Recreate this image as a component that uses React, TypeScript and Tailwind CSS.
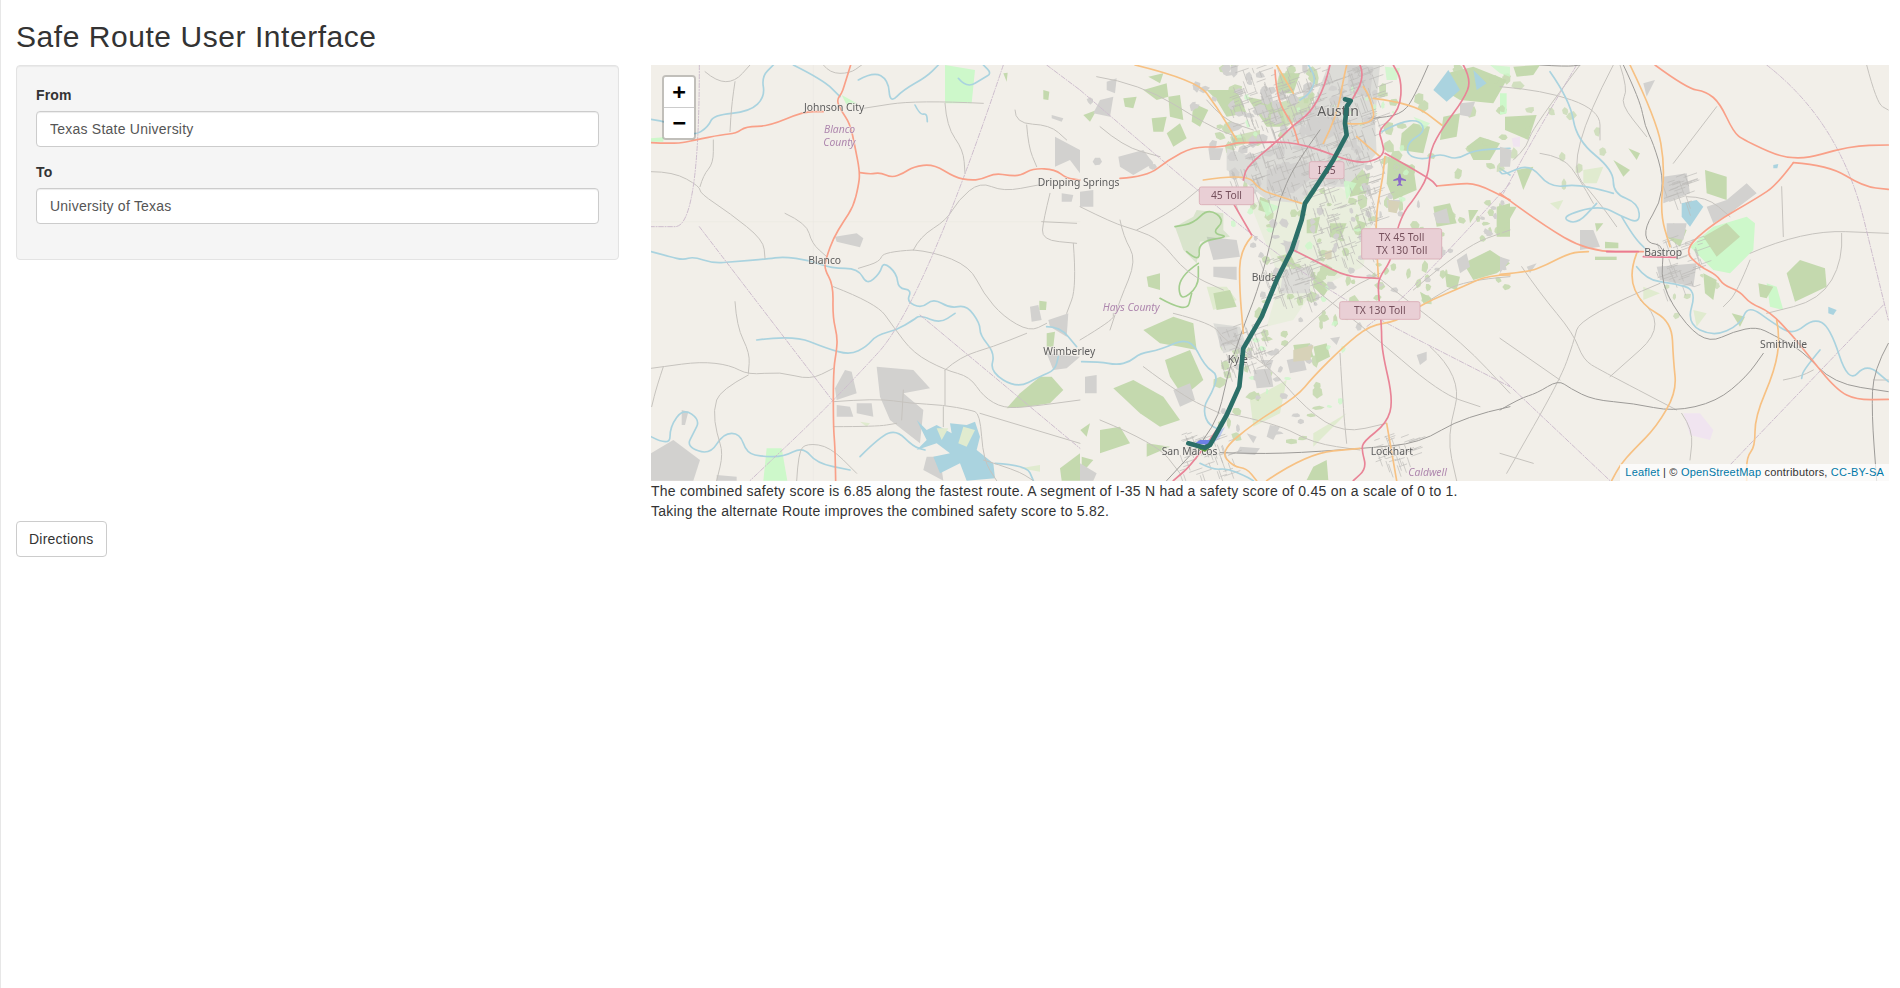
import React from "react";

const TRUNK = "#f9a088";
const MOTOR = "#e98497";
const SEC = "#f7c183";
const ROAD = "#c6c3be";
const RAIL = "#9d9b98";
const WATER = "#aad3df";
const BOUND = "#cdbdcd";
const URBAN = "#d2d1cf";
const OLIVE = "#c4d9ae";
const MINT = "#cdf8ca";
const SOFT = "#e0ebcf";

function smooth(s: string) {
  const p = s.trim().split(/\s+/).map((a) => a.split(",").map(Number));
  if (p.length < 3) return "M" + p.map((a) => a.join(" ")).join("L");
  let d = `M${p[0][0]} ${p[0][1]}`;
  for (let i = 1; i < p.length - 1; i++) {
    const mx = (p[i][0] + p[i + 1][0]) / 2;
    const my = (p[i][1] + p[i + 1][1]) / 2;
    d += `Q${p[i][0]} ${p[i][1]} ${mx} ${my}`;
  }
  const e = p[p.length - 1];
  return d + `L${e[0]} ${e[1]}`;
}

function rng(seed: number) {
  let s = seed;
  return () => {
    s = (s * 16807) % 2147483647;
    return s / 2147483647;
  };
}

function blobs(n: number, x0: number, y0: number, x1: number, y1: number, min: number, max: number, seed: number) {
  const r = rng(seed);
  const out: string[] = [];
  for (let i = 0; i < n; i++) {
    const x = x0 + r() * (x1 - x0);
    const y = y0 + r() * (y1 - y0);
    const w = min + r() * (max - min);
    const h = min + r() * (max - min);
    const a = r() * 3.14;
    const pts: string[] = [];
    for (let k = 0; k < 6; k++) {
      const t = (k / 6) * 6.283 + a;
      const q = 0.65 + r() * 0.5;
      pts.push(`${(x + Math.cos(t) * w * q).toFixed(0)},${(y + Math.sin(t) * h * q).toFixed(0)}`);
    }
    out.push(pts.join(" "));
  }
  return out;
}

function streets(n: number, x0: number, y0: number, x1: number, y1: number, seed: number) {
  const r = rng(seed);
  const out: string[] = [];
  for (let i = 0; i < n; i++) {
    const x = x0 + r() * (x1 - x0);
    const y = y0 + r() * (y1 - y0);
    const l = 12 + r() * 34;
    const v = r() > 0.5;
    out.push(v ? `${x.toFixed(0)},${y.toFixed(0)} ${(x + l * 0.35).toFixed(0)},${(y + l).toFixed(0)}` : `${x.toFixed(0)},${y.toFixed(0)} ${(x + l).toFixed(0)},${(y - l * 0.35).toFixed(0)}`);
  }
  return out;
}

function Lines({ c, w, items, dash, op }: { c: string; w: number; items: string[]; dash?: string; op?: number }) {
  return (
    <g fill="none" stroke={c} strokeWidth={w} strokeLinejoin="round" strokeLinecap="round" strokeDasharray={dash} opacity={op}>
      {items.map((s, i) => (
        <path key={i} d={smooth(s)} />
      ))}
    </g>
  );
}

function Polys({ c, items, op }: { c: string; items: string[]; op?: number }) {
  return (
    <g fill={c} opacity={op}>
      {items.map((s, i) => (
        <polygon key={i} points={s} />
      ))}
    </g>
  );
}

function Label({ x, y, size = 31, c = "#5e5e5e", italic, children }: { x: number; y: number; size?: number; c?: string; italic?: boolean; children: string }) {
  return (
    <text x={x} y={y} fontSize={size} fill={c} fontStyle={italic ? "italic" : "normal"} stroke="#f2efe9" strokeWidth={5} strokeOpacity={0.55} paintOrder="stroke" fontFamily="'Noto Sans','Open Sans',sans-serif">
      {children}
    </text>
  );
}

function Shield({ x, y, w, h, lines }: { x: number; y: number; w: number; h: number; lines: string[] }) {
  return (
    <g>
      <rect x={x} y={y} width={w} height={h} rx={6} fill="#e9cfd5" stroke="#dcb2bb" strokeWidth={3} />
      {lines.map((t, i) => (
        <text key={i} x={x + w / 2} y={y + h / 2 + 11 + (i - (lines.length - 1) / 2) * 37} textAnchor="middle" fontSize={31} fill="#75505c" fontFamily="'Noto Sans','Open Sans',sans-serif">
          {t}
        </text>
      ))}
    </g>
  );
}

function WestMap() {
  return (
    <g transform="translate(650 60) scale(0.33333)">
      <Polys c={MINT} items={["885,15 975,30 965,130 885,130", "350,1165 395,1165 412,1262 340,1262", "575,105 620,130 590,135", "0,235 40,232 40,245 0,245"]} />
      <Polys c={OLIVE} items={["1070,1045 1110,1000 1170,950 1205,950 1240,990 1200,1030 1130,1040", "1180,90 1198,95 1195,120 1180,118", "1060,40 1073,38 1070,65", "1168,722 1190,725 1188,750 1168,750", "1190,820 1215,815 1210,860 1190,860", "1230,1225 1290,1180 1290,1262 1235,1262"]} />
      <Polys c={URBAN} items={[
        "555,530 620,520 640,535 630,562 560,545",
        "585,930 605,935 620,1000 560,1020 555,985",
        "680,920 790,930 840,985 760,1000 820,1050 810,1150 720,1080 690,1010",
        "560,1035 600,1040 610,1070 560,1070",
        "620,1030 665,1030 670,1070 620,1060",
        "3,1180 70,1140 150,1200 130,1262 3,1262",
        "200,1245 260,1250 260,1262 200,1262",
        "1215,230 1290,270 1290,340 1260,300 1215,320",
        "1235,400 1270,405 1265,425 1235,425",
        "1140,740 1165,735 1175,780 1145,785",
        "1195,780 1255,760 1250,830 1200,800",
        "1190,880 1290,890 1250,925 1210,930",
        "830,1190 870,1190 880,1262 820,1230",
        "95,1050 115,1055 105,1095 95,1095",
        "1205,165 1240,175 1235,185 1205,175",
      ]} />
      <Polys c={WATER} items={["800,1080 830,1110 860,1095 905,1120 900,1090 950,1095 975,1085 990,1130 980,1170 1030,1210 1035,1255 950,1262 930,1210 870,1240 850,1190 900,1180 860,1150 800,1170 830,1140"]} />
      <Polys c={SOFT} items={["940,1100 975,1110 950,1160 925,1150", "630,1085 660,1090 650,1100", "1110,1225 1170,1215 1170,1235", "860,1105 895,1105 875,1140"]} />
      <Lines c="#e8e6e0" w={1.5} items={["490,15 490,1262", "3,485 1290,485"]} />
      <Lines c={WATER} w={5} items={[
        "3,178 60,185 130,230 175,200 190,165 300,155 345,110 335,50 370,15",
        "430,15 520,60 570,110",
        "625,60 670,35 715,60 720,130 760,90 830,50 865,15",
        "925,55 950,85 1000,55 1025,40 1000,15",
        "795,135 810,165 830,160 832,185",
        "3,575 60,590 100,600 130,590 190,610 250,605 350,597 400,590 475,600 545,625 625,625 650,675 690,640 700,605 740,640 745,685 785,690 770,725 815,745 850,715 900,745 950,735 990,790 990,825 1035,880 1020,935 1100,985 1170,950 1215,930 1225,890",
        "320,840 430,825 530,865 600,885 650,860 680,825 740,810 790,780 810,765 870,790 915,760",
        "3,1130 60,1160 60,1100 100,1045 150,1080 130,1120 110,1160 180,1185 220,1120 270,1120 290,1180 340,1190 400,1190 460,1160 500,1210 600,1230",
        "630,1190 690,1130 740,1110 790,1160 825,1170",
        "1035,1210 1130,1215 1150,1262",
        "1190,800 1230,800 1280,860",
      ]} />
      <Lines c={ROAD} w={3} items={[
        "3,335 70,335 150,380 150,400 240,460 340,540 345,595",
        "150,380 160,345 190,310 190,240",
        "255,65 245,130 240,215",
        "165,35 200,65 255,65 300,15",
        "520,15 540,40 600,40 635,15",
        "405,460 470,490 485,550 530,590",
        "550,680 680,730 730,800 790,880 885,930 960,950 1000,1010 1060,1045 1140,1040 1290,1020",
        "790,570 700,575 690,605 625,625",
        "790,570 850,575 960,620 1000,700 1060,770 1140,815 1190,790",
        "790,570 810,530 890,480 925,420 990,365 1060,395 1165,375",
        "255,725 260,800 300,880 295,940",
        "3,925 40,920 150,905 240,915 295,945 390,935 480,960 550,925",
        "40,920 20,980 5,1040",
        "295,945 210,990 190,1050 200,1120 220,1180 200,1262",
        "550,1025 680,1015 780,1030 880,1035 960,1050 990,1060 1000,1200 1040,1262",
        "885,930 885,1035",
        "885,930 930,890 1030,860 1130,820",
        "885,130 890,200 940,270 945,340",
        "1000,130 800,120 640,145",
        "1095,150 1095,190 1200,195 1250,240",
        "1130,195 1135,260 1160,320",
        "1200,400 1180,480 1175,540 1280,550",
        "1175,485 1280,490",
        "1270,550 1280,680 1250,760",
        "440,1262 445,1175 470,1150 540,1160 620,1240",
        "880,1040 880,1100",
        "1000,1200 1100,1230 1150,1262",
        "990,1060 1290,1150",
        "550,1100 680,1100 740,1090",
        "760,990 755,1080",
      ]} />
      <Lines c={BOUND} w={3} dash="14 5 3 5" items={[
        "148,15 148,500 3,500",
        "148,500 550,1025",
        "1060,15 820,730 550,1025 300,1262",
        "810,765 1290,1165",
        "1190,15 1290,90",
      ]} />
      <Lines c={TRUNK} w={5} items={[
        "3,248 80,252 135,240 215,224 258,220 288,199 355,199 460,155 520,155",
        "602,15 582,80 575,100 560,120 572,150 600,190 615,260 630,338 625,380 610,440 580,485 550,535 530,590 522,625 550,675 548,770 562,830 560,870 550,930 550,1100 555,1160 557,1262",
        "630,338 660,343 690,337 725,353 760,340 790,320 850,312 915,352 960,361 995,358 1035,340 1080,347 1110,347 1150,325 1215,328 1250,355 1290,360",
      ]} />
    </g>
  );
}

const greenPatches = [
  "190,90 260,70 265,110 230,120", "265,110 300,105 310,180 270,170", "340,130 385,150 360,200 335,185", "215,175 260,170 250,215 220,215",
  "260,220 300,190 320,235 280,260", "130,115 170,110 160,145 135,140", "10,165 50,150 30,185", "205,50 250,40 240,70",
  "380,90 470,90 500,160 440,170 410,120", "500,110 600,130 620,200 560,200", "600,40 660,40 640,100 590,100", "840,30 880,30 870,70",
  "965,220 1000,190 1050,200 1030,280 960,270", "1100,40 1180,20 1280,60 1240,130 1140,120 1090,90", "1090,170 1140,160 1130,230 1080,240",
  "1160,260 1200,230 1260,250 1230,300 1180,300", "925,290 1000,320 1010,390 940,420 920,370", "805,350 870,340 860,400 810,410",
  "1060,440 1110,430 1130,490 1070,500", "1250,440 1290,430 1290,530 1250,530", "1165,450 1195,450 1170,490", "750,490 800,490 780,540 750,530",
  "1150,610 1230,570 1290,610 1250,640 1180,660", "1095,640 1140,650 1130,690 1100,680", "1020,695 1055,715 1030,730",
  "660,630 690,640 690,690 660,680", "700,640 750,680 730,710 700,680", "190,810 280,770 340,790 350,870 300,860 240,850",
  "255,900 330,870 370,960 310,1010 270,950", "100,985 160,960 250,1010 300,1080 240,1100 180,1060", "60,1110 120,1100 150,1150 60,1180",
  "1,1110 30,1090 20,1130", "200,1150 270,1160 200,1190", "5,1190 40,1200 5,1240", "400,700 450,690 470,740 410,750",
  "200,650 240,640 240,690 205,680", "640,855 690,850 700,890 650,905", "700,860 740,850 750,890 710,910", "590,590 630,580 650,620 620,620",
  "540,410 570,420 565,460 535,450", "680,480 720,470 710,520 680,520", "830,480 860,490 840,530", "740,1200 700,1220 680,1260 745,1260",
];

const grayPatches = [
  "60,120 100,110 90,170 40,160", "80,65 110,55 105,100 80,90", "115,290 190,270 220,310 160,345 120,320", "0,395 40,390 40,440 0,440", "385,265 430,265 420,300 390,300",
  "380,530 470,540 480,590 400,600", "400,620 470,620 470,660 400,650", "1140,130 1185,125 1170,170 1140,165", "1060,460 1100,445 1110,490 1070,490",
  "1130,600 1160,580 1170,620 1140,640", "1010,885 1040,875 1040,900 1020,915", "280,990 330,970 345,1020 300,1040", "15,950 50,945 50,1000 15,1000",
  "610,540 640,550 620,590", "520,930 570,925 580,980 530,985", "540,900 580,900 570,930", "410,800 470,800 480,850 420,860",
  "750,835 780,830 770,855", "600,550 660,540 650,580", "920,420 960,420 950,455 925,450", "480,1160 540,1165 525,1185 470,1180",
  "0,1210 50,1240 40,1262 0,1262", "570,1095 600,1100 580,1140 560,1130", "500,1120 530,1130 520,1150", "620,900 670,890 680,930 630,940",
];

const scatterGreen = [
  ...blobs(60, 420, 15, 960, 430, 8, 24, 11),
  ...blobs(45, 520, 430, 900, 850, 6, 20, 23),
  ...blobs(30, 900, 400, 1290, 720, 6, 18, 37),
  ...blobs(24, 420, 850, 720, 1150, 6, 20, 41),
  ...blobs(20, 960, 15, 1290, 400, 8, 22, 53),
];
const scatterGray = [
  ...blobs(90, 440, 20, 900, 420, 7, 22, 61),
  ...blobs(30, 520, 430, 880, 800, 6, 16, 71),
  ...blobs(22, 900, 400, 1290, 700, 5, 14, 83),
  ...blobs(20, 430, 850, 700, 1120, 6, 16, 97),
  ...blobs(10, 30, 40, 420, 330, 8, 18, 101),
];
const scatterMint = [...blobs(30, 460, 60, 1000, 560, 5, 14, 113), ...blobs(14, 520, 600, 800, 1100, 5, 14, 127)];
const streetNet = [
  ...streets(420, 450, 20, 900, 420, 131),
  ...streets(70, 540, 600, 700, 720, 137),
  ...streets(60, 420, 790, 560, 930, 139),
  ...streets(80, 700, 420, 900, 600, 149),
  ...streets(60, 300, 1120, 460, 1250, 151),
  ...streets(40, 880, 1120, 1000, 1220, 157),
];

function CenterMap() {
  return (
    <g transform="translate(1080 60) scale(0.33333)">
      <Polys c="#e9eedd" items={["510,430 780,380 880,460 850,620 700,690 640,780 560,800 600,660"]} />
      <Polys c={SOFT} items={["380,680 440,680 470,720 400,750", "700,1120 800,1060 700,1160", "510,1020 620,960 600,1060 520,1100"]} />
      <Polys c={OLIVE} items={greenPatches} />
      <Polys c={OLIVE} items={scatterGreen} op={0.85} />
      <Polys c="#dcdcd8" items={["440,265 520,290 600,245 640,195 700,130 745,15 900,15 885,180 890,280 800,380 700,380 660,430 560,420 500,370 440,330", "610,630 690,620 690,700 600,700", "400,790 480,800 500,860 430,880"]} />
      <Polys c={URBAN} items={["700,135 760,150 790,210 720,250 670,220", "560,330 680,300 700,350 640,400 560,390", "800,15 880,20 870,110 810,100"]} />
      <Polys c={OLIVE} items={["590,130 700,100 690,150 620,200", "450,230 540,210 540,240 460,260"]} op={0.8} />
      <Polys c={MINT} items={["915,20 960,25 950,60 920,60", "790,360 830,370 800,420", "1230,15 1290,20 1290,50 1260,40", "540,420 600,440 560,470", "1000,170 1050,190 1030,210"]} op={0.8} />
      <Polys c={MINT} items={scatterMint} op={0.8} />
      <Polys c={URBAN} items={grayPatches} />
      <Polys c={URBAN} items={scatterGray} />
      <Polys c="#d7d2b8" items={["925,420 960,425 950,460 925,455", "735,575 755,570 755,598 735,598", "640,870 700,855 690,900 640,905"]} />
      <Lines c="#bbbab7" w={2} items={streetNet} />
      <Polys c="#9fc98b" op={0.3} items={["285,500 340,470 350,450 430,460 430,510 450,530 360,545 350,610 310,570"]} />
      <Lines c="#9ccb86" w={5} op={0.9} items={["320,575 360,610 355,545 450,530 395,520 435,480 385,445 340,490 285,500", "355,610 295,650 300,725 355,680 355,620", "240,715 320,760 335,700"]} />
      <Polys c={WATER} items={["1060,90 1105,30 1140,90 1100,125", "1180,30 1220,70 1190,90"]} />
      <Lines c={WATER} w={5} items={[
        "685,15 710,50 690,100 660,120",
        "905,215 960,185 1020,180 1035,215 985,245 980,285 1030,300 1080,280 1130,300 1180,270 1290,265",
        "1260,325 1290,345",
        "5,905 60,905 110,915 150,905 180,880 240,870 330,830 375,920 415,945 395,1000 370,1040 380,1090 420,1110",
        "360,1210 400,1230 440,1225 490,1245 520,1262",
      ]} />
      <Lines c={ROAD} w={3} items={[
        "0,440 100,490 170,510 240,540 320,640 430,690",
        "120,480 130,530 170,600 120,720 90,810",
        "280,760 400,790 430,840 560,910 680,1050 790,1120 920,1090",
        "170,510 270,460 360,385",
        "560,910 780,700 900,640",
        "720,700 850,800 1080,1000 1200,1040",
        "830,600 940,690 1150,850 1290,1000",
        "1000,690 1150,560 1290,510",
        "780,880 790,1050 800,1150",
        "1050,860 1150,950 1100,1130 1130,1262",
        "1290,650 1150,660 1050,720",
        "60,1080 230,1150 300,1240",
        "190,920 310,1010 420,1060",
        "440,1060 590,1090 700,1150 840,1170",
        "0,840 100,780 100,760",
        "60,200 130,260 240,290",
        "50,50 180,70 390,200 470,230",
        "380,120 430,180 520,210",
      ]} />
      <Lines c={RAIL} w={3} items={[
        "600,420 570,560 530,700 490,800 440,950 410,1100 260,1262",
        "1290,1040 1150,1070 1020,1150 850,1165 600,1182 420,1178",
        "1045,15 1000,120 960,165 880,175",
        "720,210 640,320 600,420",
      ]} />
      <Lines c={BOUND} w={3} dash="14 5 3 5" items={[
        "0,90 280,330 520,530 800,730 1290,980",
        "1290,370 1000,690 860,800",
      ]} />
      <Lines c={SEC} w={5} items={[
        "165,15 350,60 410,140 470,240",
        "590,15 640,100",
        "370,360 500,340 540,390 600,410 665,430",
        "515,530 480,570 478,680 490,820",
        "915,290 910,350 885,470 895,650",
        "1290,645 1225,645 1150,680 1030,730 950,785 870,795 790,860 700,950 650,1010 520,1090 420,1175 460,1220 500,1225 530,1262",
        "730,250 770,170 790,60 800,15",
        "830,230 900,290",
        "800,190 890,200 870,110 850,80",
        "880,115 1000,130 1085,195",
        "920,1090 950,1262",
        "560,1262 680,1180 840,1165",
      ]} />
      <Lines c={TRUNK} w={5} items={[
        "120,355 200,350 265,300 340,260 420,262 470,248 510,248",
        "585,30 590,120 640,195 655,250",
        "1070,378 1130,372 1190,370 1290,420",
      ]} />
      <Lines c={MOTOR} w={5} items={[
        "750,15 735,80 690,160 640,195 590,245 500,320 490,360",
        "510,248 590,245 650,250 720,270 800,300 860,310 915,285 905,240 895,210 960,150 965,60 940,15",
        "840,15 855,50 810,130",
        "1150,15 1175,60 1150,120 1090,200 1050,270 1045,350 1000,420 975,450 950,510 935,600 895,655 895,700 905,800 905,870 940,1020 920,1090 850,1145 845,1170 860,1225 820,1262",
        "460,430 515,525",
        "640,570 720,610 800,650 895,655",
        "915,280 1050,355 1070,378",
        "410,1110 340,1210 280,1262",
      ]} />
      <path d="M957 341l4 0 3 12 14 6 0 4-14-2-2 10 5 4 0 3-8-2-8 2 0-3 5-4-2-10-14 2 0-4 14-6 z" fill="#8a68c9" />
      <circle cx="950" cy="322" r="8" fill="none" stroke="#c9c9c9" strokeWidth="2" />
      <Label x={712} y={169} size={42}>Austin</Label>
      <Label x={515} y={662}>Buda</Label>
      <Label x={443} y={908}>Kyle</Label>
      <Label x={245} y={1186}>San Marcos</Label>
      <Label x={872} y={1184}>Lockhart</Label>
      <Label x={985} y={1248} c="#ae87ae" italic size={31}>Caldwell</Label>
      <Label x={68} y={752} c="#ae87ae" italic size={31}>Hays County</Label>
      <Shield x={358} y={381} w={163} h={53} lines={["45 Toll"]} />
      <Shield x={688} y={305} w={104} h={51} lines={["I 35"]} />
      <Shield x={845} y={506} w={240} h={91} lines={["TX 45 Toll", "TX 130 Toll"]} />
      <Shield x={779} y={725} w={241} h={53} lines={["TX 130 Toll"]} />
      <polygon points="345,1150 360,1140 392,1140 385,1155" fill="#6d80e6" />
      <polygon points="350,1163 392,1160 375,1176" fill="#5f9a3c" />
      <polygon points="410,1120 435,1100 420,1130 400,1150" fill="#9fb7ee" opacity="0.7" />
      <path d="M795 118L812 122L800 140L795 190L800 225L760 300L715 370L675 430L665 480L635 570L590 660L545 770L490 865L478 980L440 1065L390 1155L375 1163L325 1150" fill="none" stroke="#2b6f68" strokeWidth="14" strokeLinejoin="round" strokeLinecap="round" />
    </g>
  );
}

function EastMap() {
  const green = [...blobs(14, 0, 20, 330, 420, 8, 20, 211), ...blobs(8, 500, 620, 680, 800, 6, 14, 223)];
  return (
    <g transform="translate(1500 60) scale(0.33333)">
      <Polys c={MINT} items={["570,560 640,500 740,470 765,490 760,570 690,640 640,630 610,600", "0,100 20,100 20,160 0,165", "800,670 830,680 850,750 810,740"]} />
      <Polys c={OLIVE} items={[
        "15,170 110,165 85,240 15,210", "0,440 50,440 0,530", "615,330 680,350 680,420 620,400", "340,300 390,330 370,350", "385,265 420,280 410,300",
        "900,600 975,625 980,680 885,725 860,640", "610,530 680,490 720,530 650,590", "40,20 120,15 100,45 50,50", "50,330 100,320 70,390",
        "775,670 820,680 800,715 780,710", "695,760 735,770 720,800", "285,490 310,490 290,515", "315,545 355,548 355,565 315,565", "285,590 350,590 350,600 285,600",
        "520,490 560,510 540,560 500,530", "610,640 650,660 640,720 615,700",
      ]} />
      <Polys c={OLIVE} items={green} op={0.7} />
      <Polys c={URBAN} items={[
        "490,350 560,340 570,400 490,430", "620,440 680,420 740,370 770,400 690,460 640,490", "240,510 280,510 300,560 240,570",
        "470,620 590,610 580,680 480,660", "0,590 30,600 0,640", "430,70 465,60 440,110", "0,260 35,270 30,320 0,320", "500,490 560,490 550,540 500,530", "80,620 110,610 90,640",
      ]} />
      <Polys c={WATER} items={["545,430 590,420 610,440 570,500 545,470", "820,315 835,312 832,325 820,325", "985,740 1010,750 1000,765 985,760"]} />
      <Polys c="#f0e4f0" items={["550,1060 600,1060 640,1110 630,1140 570,1125", "35,235 60,230 60,260 40,260"]} />
      <Polys c={SOFT} items={["250,330 310,320 290,370 250,370", "430,680 480,700 430,720", "580,750 620,760 590,800", "150,430 190,420 175,450"]} />
      <Lines c="#bbbab7" w={2} items={[...streets(50, 470, 540, 610, 690, 233), ...streets(25, 490, 340, 570, 430, 239)]} />
      <Lines c={ROAD} w={3} items={[
        "65,620 120,700 220,820 250,900 300,930 530,1050",
        "340,15 190,300 300,430 350,500",
        "240,15 100,200 80,260 40,300",
        "480,670 240,770 220,850 180,960 20,1240",
        "0,835 180,960",
        "750,580 910,510 1165,520",
        "1025,520 1030,600 960,720 800,760",
        "520,310 650,140",
        "845,380 850,530",
        "545,1060 580,1110 570,1200",
        "0,1180 100,1210",
        "560,410 620,410 690,470",
        "0,80 130,90 300,150 300,240",
        "120,280 190,290 240,360 280,430",
        "360,15 385,90 360,130 440,230",
        "850,960 900,950 940,930",
        "1120,960 1165,960",
        "1100,15 1130,130 1165,150",
        "750,600 710,700 670,740",
        "420,720 510,790 330,950",
      ]} />
      <Lines c={BOUND} w={3} dash="14 5 3 5" items={[
        "800,15 1020,185 1165,780",
        "1150,735 690,1215",
        "0,950 330,1262",
        "230,15 120,200 10,400",
      ]} />
      <Lines c={WATER} w={5} items={[
        "150,35 210,120 230,240 340,330 340,400 415,430 420,490 365,470 300,435 180,470 230,495 290,430",
        "340,400 240,370 150,385 90,310 10,345 0,335",
        "410,620 440,660 520,670 590,690 560,790 640,830 720,795 745,735 820,790 880,825 940,775 990,800 1045,970 1100,910 1165,965",
        "960,870 910,930 905,955",
        "365,470 400,530 440,570",
      ]} />
      <Lines c={RAIL} w={3} items={[
        "370,15 420,120 435,200 460,250 490,350 480,430 435,500 440,550 495,555 480,670 560,800 630,848 700,815 770,800 820,825 905,870 1000,970 1165,995",
        "0,1050 60,1015 110,1000 175,960 210,985 280,1020 400,1030 520,1055 650,1025 740,950 790,880",
        "1165,850 1120,930 1115,1060 1130,1262",
        "120,15 200,20 240,15",
      ]} />
      <Lines c={SEC} w={5} items={[
        "390,15 470,180 495,320 480,460 510,560",
        "0,643 80,637 140,615 210,578 265,575",
        "410,580 385,645 425,735 515,785 520,900 530,995 470,1100 400,1170 360,1215 335,1262",
        "830,780 840,830 825,930 765,1070 765,1160 740,1190 740,1262",
      ]} />
      <Lines c={TRUNK} w={5} items={[
        "465,15 560,85 620,95 660,130 700,215 730,240 880,308 1050,257 1165,255",
        "880,308 985,315 1090,380 1165,388",
        "880,308 830,375 770,415 640,490 550,570 600,620 650,645 670,675 720,695 750,730 810,755 880,830 920,880 1010,990 1070,1020 1165,1018",
        "0,400 120,490 265,575 430,575",
      ]} />
      <Lines c="#ea7a92" w={5} items={["320,575 415,575", "430,590 530,592"]} />
      <Label x={433} y={589}>Bastrop</Label>
      <Label x={780} y={863}>Smithville</Label>
    </g>
  );
}

function WestLabels() {
  return (
    <g transform="translate(650 60) scale(0.33333)">
      <Label x={462} y={152}>Johnson City</Label>
      <Label x={522} y={220} c="#ae87ae" italic size={31}>Blanco</Label>
      <Label x={520} y={258} c="#ae87ae" italic size={31}>County</Label>
      <Label x={475} y={613}>Blanco</Label>
      <Label x={1163} y={379}>Dripping Springs</Label>
      <Label x={1180} y={884}>Wimberley</Label>
    </g>
  );
}

export default function App() {
  return (
    <div className="min-h-[988px] border-l border-[#e7e7e7] bg-white pl-[15px] pr-[11px] font-['Liberation_Sans',Arial,sans-serif] text-[14px] leading-[20px] text-[#333333]">
      <h2 className="pt-[20px] pb-[12px] text-[30px] leading-[33px] font-normal tracking-[0.55px]">Safe Route User Interface</h2>
      <div className="flex items-start gap-[32px]">
        <div className="w-[603px] shrink-0">
          <form className="h-[195px] rounded-[4px] border border-[#e3e3e3] bg-[#f5f5f5] p-[19px] shadow-[inset_0_1px_1px_rgba(0,0,0,0.05)]">
            <label className="mb-[6px] block font-bold tracking-[0.15px]">From</label>
            <input readOnly value="Texas State University" className="mb-[15px] block h-[36px] w-full rounded-[4px] border border-[#cccccc] bg-white pl-[13px] pr-[12px] tracking-[0.23px] text-[#555555] shadow-[inset_0_1px_1px_rgba(0,0,0,0.075)] outline-none" />
            <label className="mb-[6px] block font-bold tracking-[0.15px]">To</label>
            <input readOnly value="University of Texas" className="block h-[36px] w-full rounded-[4px] border border-[#cccccc] bg-white pl-[13px] pr-[12px] tracking-[0.23px] text-[#555555] shadow-[inset_0_1px_1px_rgba(0,0,0,0.075)] outline-none" />
          </form>
          <button type="button" className="mt-[261px] h-[36px] rounded-[4px] border border-[#cccccc] bg-white px-[12px] tracking-[0.23px] text-[#333333]">Directions</button>
        </div>
        <div className="min-w-0 flex-1">
          <div className="relative h-[416px] overflow-hidden bg-[#f2efe9]">
            <svg viewBox="651 65 1238 416" className="absolute inset-0 h-full w-full blur-[0.5px]" preserveAspectRatio="none">
              <rect x="651" y="65" width="1238" height="416" fill="#f2efe9" />
              <WestMap />
              <CenterMap />
              <EastMap />
              <WestLabels />
            </svg>
            <div className="absolute left-[11px] top-[10px] flex w-[34px] flex-col rounded-[4px] border-2 border-[rgba(0,0,0,0.2)] bg-clip-padding">
              <div className="flex h-[31px] items-center justify-center rounded-t-[2px] border-b border-[#cccccc] bg-white font-['DejaVu_Sans_Mono',monospace] text-[22px] font-bold leading-[30px] text-black">+</div>
              <div className="flex h-[30px] items-center justify-center rounded-b-[2px] bg-white font-['DejaVu_Sans_Mono',monospace] text-[22px] font-bold leading-[30px] text-black">−</div>
            </div>
            <div className="absolute bottom-0 right-0 bg-[rgba(255,255,255,0.7)] px-[5px] text-[11px] leading-[17px] tracking-[0.2px] text-[#333333]">
              <span className="text-[#0078a8]">Leaflet</span> | © <span className="text-[#0078a8]">OpenStreetMap</span> contributors, <span className="text-[#0078a8]">CC-BY-SA</span>
            </div>
          </div>
          <p className="tracking-[0.23px]">The combined safety score is 6.85 along the fastest route. A segment of I-35 N had a safety score of 0.45 on a scale of 0 to 1.</p>
          <p className="tracking-[0.23px]">Taking the alternate Route improves the combined safety score to 5.82.</p>
        </div>
      </div>
    </div>
  );
}
